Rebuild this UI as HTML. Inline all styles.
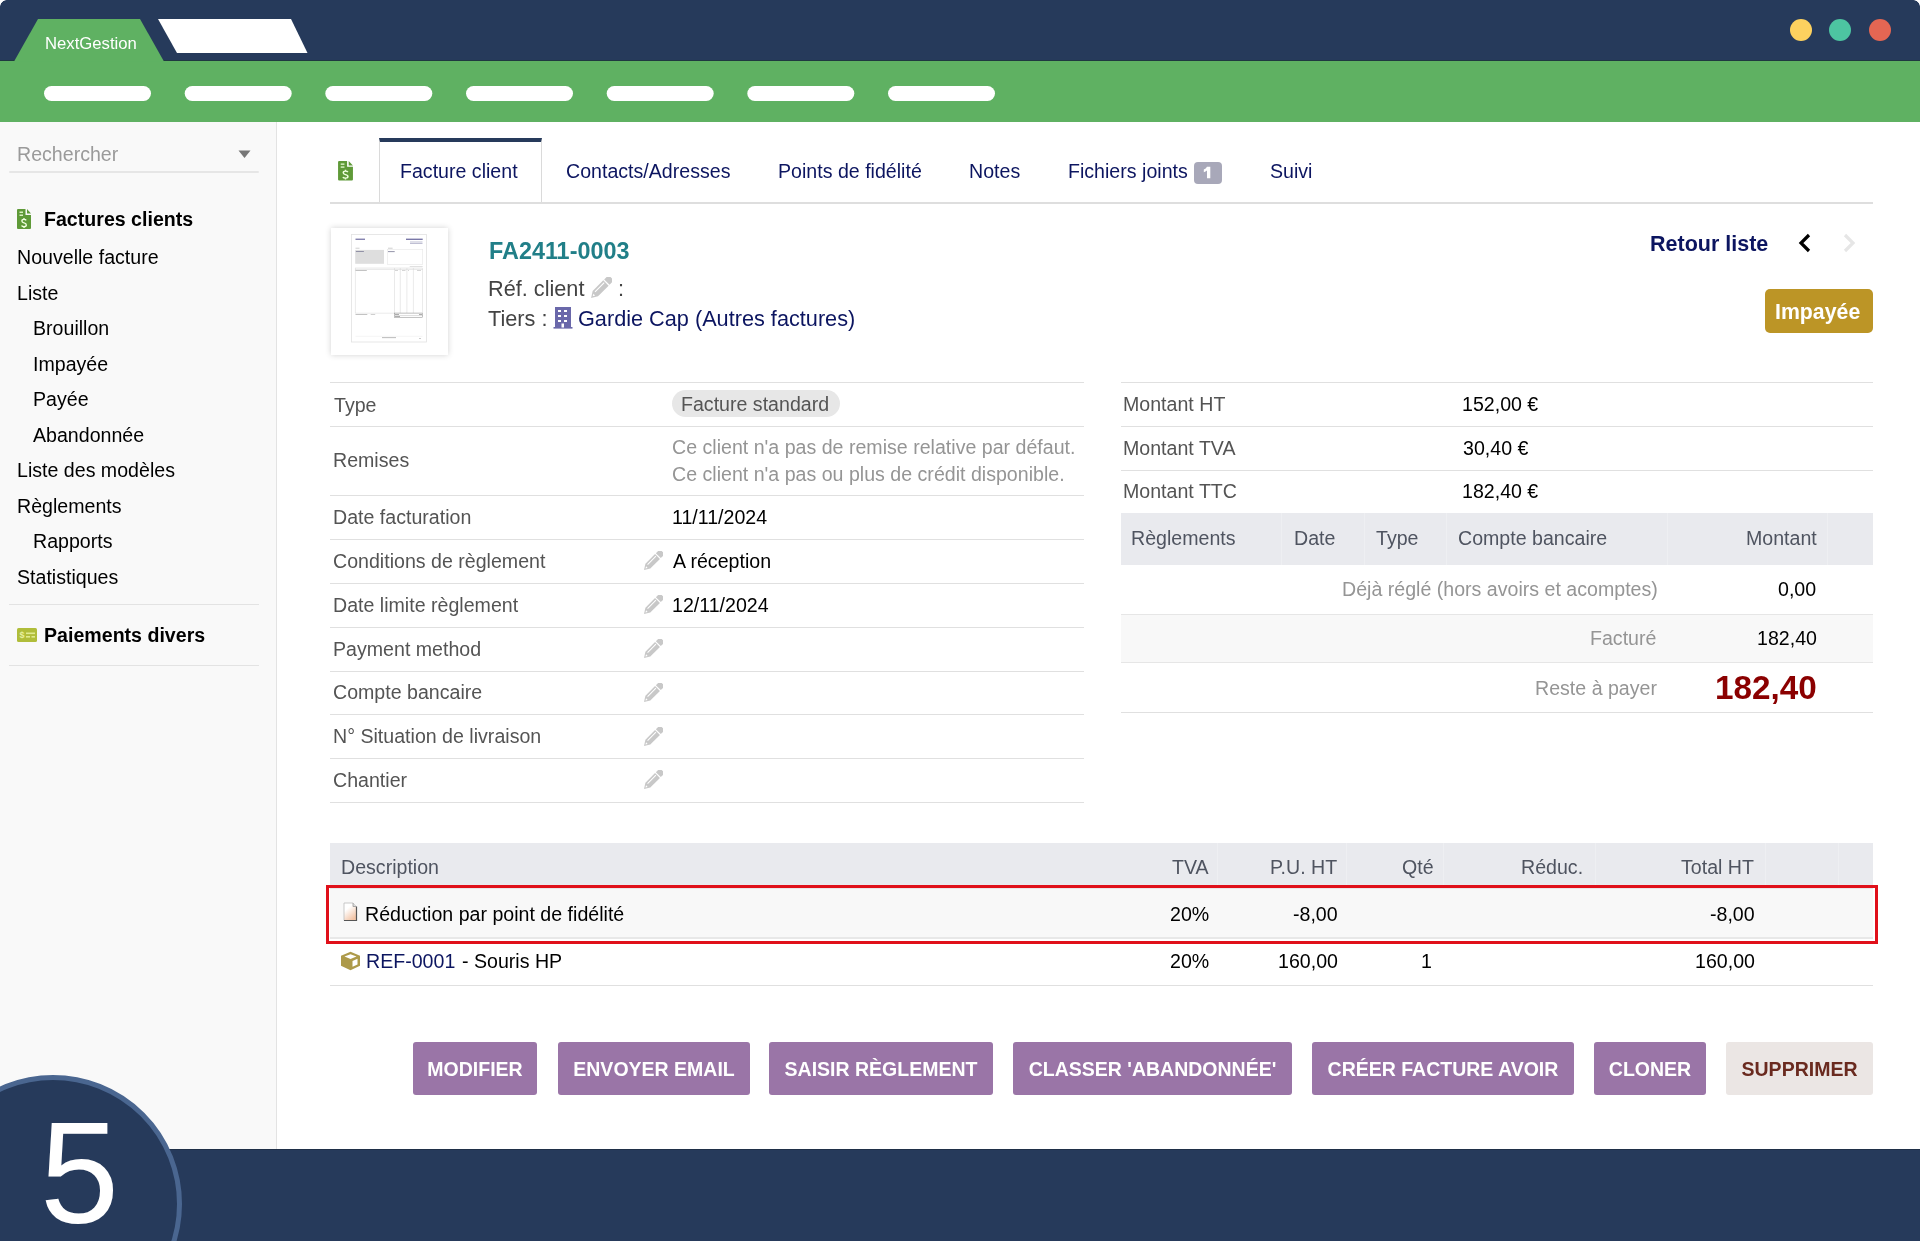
<!DOCTYPE html>
<html><head><meta charset="utf-8"><style>
html,body{margin:0;padding:0;width:1920px;height:1241px;overflow:hidden;background:#fff;font-family:"Liberation Sans",sans-serif}
.t{position:absolute;white-space:nowrap;line-height:1;will-change:transform}
.b{position:absolute}
.btn{position:absolute;top:1042px;height:53px;background:#9a75a7;color:#fff;font-weight:bold;font-size:19.5px;line-height:54px;text-align:center;border-radius:3px;white-space:nowrap;will-change:transform}
</style></head><body>
<svg class="b" style="left:0;top:0" width="1920" height="122">
<rect x="0" y="0" width="1920" height="61" fill="#263a5b"/><rect x="0" y="60" width="1920" height="1" fill="#1f3840"/>
<rect x="0" y="61" width="1920" height="61" fill="#5fb162"/>
<polygon points="14,61.5 38,19 140,19 164,61.5" fill="#5fb162"/>
<polygon points="158,19 291,19 307.5,53 177,53" fill="#fff"/>
<circle cx="1801" cy="30" r="11" fill="#fdd15f"/>
<circle cx="1840" cy="30" r="11" fill="#4dc5a1"/>
<circle cx="1880" cy="30" r="11" fill="#e46653"/>

<rect x="44.0" y="86" width="107" height="15" rx="7.5" fill="#fff"/>
<rect x="184.7" y="86" width="107" height="15" rx="7.5" fill="#fff"/>
<rect x="325.3" y="86" width="107" height="15" rx="7.5" fill="#fff"/>
<rect x="466.0" y="86" width="107" height="15" rx="7.5" fill="#fff"/>
<rect x="606.7" y="86" width="107" height="15" rx="7.5" fill="#fff"/>
<rect x="747.3" y="86" width="107" height="15" rx="7.5" fill="#fff"/>
<rect x="888.0" y="86" width="107" height="15" rx="7.5" fill="#fff"/>
</svg>
<div class="b" style="left:0;top:0;width:7px;height:7px;background:radial-gradient(circle at 7px 7px, transparent 6.5px, #fff 7.2px)"></div>
<div class="b" style="left:1913px;top:0;width:7px;height:7px;background:radial-gradient(circle at 0px 7px, transparent 6.5px, #fff 7.2px)"></div>
<div class="t" style="left:45.43px;top:36px;font-size:16.7px;color:#fff;transform-origin:0 13px;transform:scaleY(1.02);">NextGestion</div>
<div class="b" style="left:0px;top:122px;width:277px;height:1027px;background:#f9f9f9;border-right:1px solid #e3e3e3;box-sizing:border-box"></div>
<div class="t" style="left:16.79px;top:145px;font-size:19.6px;color:#9a9a9a;transform-origin:0 16px;transform:scaleY(1.02);">Rechercher</div>
<svg class="b" style="left:238px;top:150px" width="14" height="9"><polygon points="0.5,0.5 12.5,0.5 6.5,8" fill="#777"/></svg>
<div class="b" style="left:9px;top:171px;width:250px;height:2px;background:#e6e6e6;border-radius:2px"></div>
<svg class="b" style="left:16px;top:208px" width="16" height="22" viewBox="0 0 16 22">
<path d="M1.5 1 H9.5 V7 H15 V20 Q15 21 14 21 H2 Q1 21 1 20 V2 Q1 1 2 1 Z" fill="#5f9a38"/>
<path d="M11 1 L15 5.5 H11 Z" fill="#5f9a38"/>
<rect x="3.5" y="3.5" width="3.5" height="1.5" fill="#d8f0c0"/><rect x="3.5" y="6.5" width="3.5" height="1.5" fill="#d8f0c0"/>
<path d="M10.2 12.4 Q9.7 11.4 8 11.4 Q5.9 11.4 5.9 13 Q5.9 14.4 8 14.9 Q10.3 15.4 10.3 17 Q10.3 18.6 8 18.6 Q6.1 18.6 5.6 17.4 M8 10 V11.4 M8 18.6 V20" fill="none" stroke="#f0ffe0" stroke-width="1.4"/>
</svg>
<div class="t" style="left:43.79px;top:210px;font-size:19.6px;color:#000;font-weight:bold;transform-origin:0 16px;transform:scaleY(1.02);">Factures clients</div>
<div class="t" style="left:16.89px;top:248px;font-size:19.6px;color:#000;transform-origin:0 16px;transform:scaleY(1.02);">Nouvelle facture</div>
<div class="t" style="left:16.89px;top:284px;font-size:19.6px;color:#000;transform-origin:0 16px;transform:scaleY(1.02);">Liste</div>
<div class="t" style="left:32.99px;top:319px;font-size:19.6px;color:#000;transform-origin:0 16px;transform:scaleY(1.02);">Brouillon</div>
<div class="t" style="left:32.80px;top:355px;font-size:19.6px;color:#000;transform-origin:0 16px;transform:scaleY(1.02);">Impayée</div>
<div class="t" style="left:32.99px;top:390px;font-size:19.6px;color:#000;transform-origin:0 16px;transform:scaleY(1.02);">Payée</div>
<div class="t" style="left:33.06px;top:426px;font-size:19.6px;color:#000;transform-origin:0 16px;transform:scaleY(1.02);">Abandonnée</div>
<div class="t" style="left:16.89px;top:461px;font-size:19.6px;color:#000;transform-origin:0 16px;transform:scaleY(1.02);">Liste des modèles</div>
<div class="t" style="left:16.89px;top:497px;font-size:19.6px;color:#000;transform-origin:0 16px;transform:scaleY(1.02);">Règlements</div>
<div class="t" style="left:32.99px;top:532px;font-size:19.6px;color:#000;transform-origin:0 16px;transform:scaleY(1.02);">Rapports</div>
<div class="t" style="left:16.90px;top:568px;font-size:19.6px;color:#000;transform-origin:0 16px;transform:scaleY(1.02);">Statistiques</div>
<div class="b" style="left:9px;top:604px;width:250px;height:1px;background:#e3e3e3"></div>
<svg class="b" style="left:16px;top:627px" width="22" height="16" viewBox="0 0 22 16">
<rect x="1" y="1" width="20" height="14" rx="1.5" fill="#b0bd3a"/>
<text x="6" y="11" font-family="Liberation Sans" font-size="9" font-weight="bold" fill="#e8f0a0" text-anchor="middle">$</text>
<rect x="10" y="5.5" width="9" height="1.6" fill="#e0ea90"/><rect x="10" y="9" width="4" height="1.6" fill="#e0ea90"/><rect x="15.5" y="9" width="3.5" height="1.6" fill="#e0ea90"/>
</svg>
<div class="t" style="left:43.79px;top:626px;font-size:19.6px;color:#000;font-weight:bold;transform-origin:0 16px;transform:scaleY(1.02);">Paiements divers</div>
<div class="b" style="left:9px;top:665px;width:250px;height:1px;background:#e3e3e3"></div>
<div class="b" style="left:0px;top:1149px;width:1920px;height:92px;background:#263a5b"></div>
<div class="b" style="left:0px;top:1149px;width:1920px;height:1px;background:#1f2f47"></div>
<div class="b" style="left:-76px;top:1075px;width:258px;height:258px;border-radius:50%;background:#263a5b;border:5px solid #4a6690;box-sizing:border-box"></div>
<div class="t" style="left:39.52px;top:1103px;font-size:142px;color:#fff;transform-origin:0 120px;transform:scaleY(1.02);">5</div>
<svg class="b" style="left:337px;top:160px" width="17" height="21.5" viewBox="0 0 16 22" preserveAspectRatio="none">
<path d="M1.5 1 H9.5 V7 H15 V20 Q15 21 14 21 H2 Q1 21 1 20 V2 Q1 1 2 1 Z" fill="#5f9a38"/>
<path d="M11 1 L15 5.5 H11 Z" fill="#5f9a38"/>
<rect x="3.5" y="3.5" width="3.5" height="1.5" fill="#d8f0c0"/><rect x="3.5" y="6.5" width="3.5" height="1.5" fill="#d8f0c0"/>
<path d="M10.2 12.4 Q9.7 11.4 8 11.4 Q5.9 11.4 5.9 13 Q5.9 14.4 8 14.9 Q10.3 15.4 10.3 17 Q10.3 18.6 8 18.6 Q6.1 18.6 5.6 17.4 M8 10 V11.4 M8 18.6 V20" fill="none" stroke="#f0ffe0" stroke-width="1.4"/>
</svg>
<div class="b" style="left:330px;top:202px;width:1543px;height:2px;background:#dedede"></div>
<div class="b" style="left:379px;top:138px;width:163px;height:64px;background:#fff;border:1px solid #dadada;border-top:4px solid #263a5b;border-bottom:none;box-sizing:border-box"></div>
<div class="t" style="left:399.69px;top:162px;font-size:19.6px;color:#0c1560;transform-origin:0 16px;transform:scaleY(1.02);">Facture client</div>
<div class="t" style="left:565.90px;top:162px;font-size:19.6px;color:#0c1560;transform-origin:0 16px;transform:scaleY(1.02);">Contacts/Adresses</div>
<div class="t" style="left:777.69px;top:162px;font-size:19.6px;color:#0c1560;transform-origin:0 16px;transform:scaleY(1.02);">Points de fidélité</div>
<div class="t" style="left:969.49px;top:162px;font-size:19.6px;color:#0c1560;transform-origin:0 16px;transform:scaleY(1.02);">Notes</div>
<div class="t" style="left:1068.44px;top:162px;font-size:19.6px;color:#0c1560;transform-origin:0 16px;transform:scaleY(1.02);">Fichiers joints</div>
<div class="t" style="left:1270.20px;top:162px;font-size:19.6px;color:#0c1560;transform-origin:0 16px;transform:scaleY(1.02);">Suivi</div>
<div class="b" style="left:1194px;top:162px;width:28px;height:22px;background:#a8a8b9;border-radius:4px"></div>
<svg class="b" style="left:1194px;top:162px" width="28" height="22"><path d="M13 4.7 H16.3 V16.3 H13 V8.4 Q11.6 9.6 9.8 10.2 V7.5 Q12 6.6 13 4.7 Z" fill="#fff"/></svg>
<div class="b" style="left:331px;top:228px;width:117px;height:127px;background:#fff;box-shadow:0 0 6px rgba(0,0,0,0.18)"></div>
<svg class="b" style="left:351px;top:234px" width="76" height="109" viewBox="0 0 76 109">
<rect x="0.5" y="0.5" width="75" height="107.5" fill="#fff" stroke="#e2e2e2" stroke-width="0.8"/>
<rect x="4.5" y="4.6" width="9.5" height="1.3" fill="#7a78a8"/>
<rect x="55" y="4.6" width="16.7" height="1.4" fill="#7a78a8"/><rect x="59" y="7.6" width="12.5" height="0.8" fill="#b0b0c8"/><rect x="59" y="9.2" width="12.5" height="0.8" fill="#b0b0c8"/>
<rect x="4.5" y="13.8" width="4" height="0.7" fill="#bbb"/><rect x="37" y="13.8" width="4.6" height="0.7" fill="#bbb"/>
<rect x="4.2" y="15.9" width="28.8" height="13.9" fill="#dedede"/>
<rect x="4.9" y="17" width="8" height="0.9" fill="#8888a0"/>
<rect x="36.5" y="15.6" width="35.2" height="15" fill="#fff" stroke="#e6e6e6" stroke-width="0.6"/>
<rect x="37" y="17.2" width="6.7" height="0.9" fill="#8888a0"/>
<rect x="58.7" y="32" width="13" height="0.6" fill="#ccc"/>
<rect x="4.2" y="34" width="67.5" height="45.1" fill="none" stroke="#d8d8d8" stroke-width="0.5"/>
<line x1="4.2" y1="35.3" x2="71.7" y2="35.3" stroke="#c8c8c8" stroke-width="0.5"/>
<rect x="4.5" y="36" width="11.3" height="0.7" fill="#aaa"/>
<rect x="44" y="36" width="3" height="0.6" fill="#bbb"/><rect x="51" y="36" width="3.5" height="0.6" fill="#bbb"/><rect x="57" y="36" width="1" height="0.6" fill="#bbb"/><rect x="66" y="36" width="4" height="0.6" fill="#bbb"/>
<line x1="43.5" y1="34" x2="43.5" y2="79.1" stroke="#d0d0d0" stroke-width="0.45"/>
<line x1="49.3" y1="34" x2="49.3" y2="79.1" stroke="#d0d0d0" stroke-width="0.45"/>
<line x1="55.9" y1="34" x2="55.9" y2="79.1" stroke="#d0d0d0" stroke-width="0.45"/>
<line x1="62.4" y1="34" x2="62.4" y2="79.1" stroke="#d0d0d0" stroke-width="0.45"/>
<rect x="4.5" y="80" width="11.8" height="0.7" fill="#aaa"/><rect x="19.7" y="80" width="4.5" height="0.7" fill="#bbb"/>
<rect x="43.5" y="79.1" width="28.2" height="4.5" fill="#fff" stroke="#888" stroke-width="0.5"/>
<line x1="43.5" y1="81.6" x2="71.7" y2="81.6" stroke="#aaa" stroke-width="0.4"/>
<rect x="44" y="80" width="4" height="0.6" fill="#777"/><rect x="44" y="82.3" width="5" height="0.6" fill="#777"/><rect x="68" y="80" width="3" height="0.6" fill="#777"/>
<line x1="4.5" y1="102.3" x2="71.5" y2="102.3" stroke="#e4e4e4" stroke-width="0.4"/>
<rect x="31" y="103.3" width="14" height="0.8" fill="#aaa"/><rect x="68" y="104.2" width="2" height="0.6" fill="#aaa"/>
</svg>
<div class="t" style="left:488.63px;top:240px;font-size:23.4px;color:#217f88;font-weight:bold;transform-origin:0 19px;transform:scaleY(1.02);">FA2411-0003</div>
<div class="t" style="left:488.22px;top:278px;font-size:21.7px;color:#444;transform-origin:0 18px;transform:scaleY(1.02);">Réf. client</div>
<div class="t" style="left:618.43px;top:278px;font-size:21.7px;color:#444;transform-origin:0 18px;transform:scaleY(1.02);">:</div>
<div class="t" style="left:487.82px;top:308px;font-size:21.7px;color:#444;transform-origin:0 18px;transform:scaleY(1.02);">Tiers :</div>
<div class="t" style="left:577.91px;top:308px;font-size:21.7px;color:#0c1560;transform-origin:0 18px;transform:scaleY(1.02);">Gardie Cap (Autres factures)</div>
<svg class="b" style="left:590px;top:276.5px" width="22" height="22" viewBox="0 0 22 22"><g transform="rotate(-45 11 11)"><path d="M-3 11 L3 7.2 H18 V14.8 H3 Z" fill="#c8c8c8"/><path d="M19.3 7.2 H23 Q25.5 7.2 25.5 9.7 V12.3 Q25.5 14.8 23 14.8 H19.3 Z" fill="#c8c8c8"/><rect x="4" y="9" width="13" height="1.1" fill="#fff"/><path d="M-0.8 11 L1.5 9.8 V12.2 Z" fill="#fff"/></g></svg>
<svg class="b" style="left:553px;top:307px" width="20" height="22" viewBox="0 0 20 22">
<rect x="2" y="0" width="16" height="21" fill="#6a68aa"/><rect x="0.5" y="20" width="19" height="1.6" fill="#6a68aa"/>
<rect x="5" y="3" width="3" height="2" fill="#fff"/><rect x="11" y="3" width="3" height="2" fill="#fff"/>
<rect x="5" y="8" width="3" height="2" fill="#fff"/><rect x="11" y="8" width="3" height="2" fill="#fff"/>
<rect x="5" y="13" width="3" height="2" fill="#fff"/><rect x="11" y="13" width="3" height="2" fill="#fff"/>
<rect x="8.5" y="16.5" width="2.5" height="4" fill="#fff"/>
</svg>
<div class="t" style="left:1649.76px;top:234px;font-size:21.5px;color:#0c1560;font-weight:bold;transform-origin:0 17px;transform:scaleY(1.02);">Retour liste</div>
<svg class="b" style="left:1797px;top:232px" width="64" height="22"><polyline points="12,3 4,11 12,19" fill="none" stroke="#000" stroke-width="3.2"/><polyline points="48,3 56,11 48,19" fill="none" stroke="#e6e6e6" stroke-width="3.2"/></svg>
<div class="b" style="left:1765px;top:289px;width:108px;height:44px;background:#bc9526;border-radius:5px"></div>
<div class="t" style="left:1775.37px;top:302px;font-size:21.3px;color:#fff;font-weight:bold;transform-origin:0 17px;transform:scaleY(1.02);">Impayée</div>
<div class="b" style="left:330px;top:382px;width:754px;height:1px;background:#e0e0e0"></div>
<div class="b" style="left:330px;top:426px;width:754px;height:1px;background:#e0e0e0"></div>
<div class="b" style="left:330px;top:495px;width:754px;height:1px;background:#e0e0e0"></div>
<div class="b" style="left:330px;top:539px;width:754px;height:1px;background:#e0e0e0"></div>
<div class="b" style="left:330px;top:583px;width:754px;height:1px;background:#e0e0e0"></div>
<div class="b" style="left:330px;top:627px;width:754px;height:1px;background:#e0e0e0"></div>
<div class="b" style="left:330px;top:671px;width:754px;height:1px;background:#e0e0e0"></div>
<div class="b" style="left:330px;top:714px;width:754px;height:1px;background:#e0e0e0"></div>
<div class="b" style="left:330px;top:758px;width:754px;height:1px;background:#e0e0e0"></div>
<div class="b" style="left:330px;top:802px;width:754px;height:1px;background:#e0e0e0"></div>
<div class="t" style="left:333.57px;top:396px;font-size:19.6px;color:#545454;transform-origin:0 16px;transform:scaleY(1.02);">Type</div>
<div class="t" style="left:333.39px;top:451px;font-size:19.6px;color:#545454;transform-origin:0 16px;transform:scaleY(1.02);">Remises</div>
<div class="t" style="left:333.39px;top:508px;font-size:19.6px;color:#545454;transform-origin:0 16px;transform:scaleY(1.02);">Date facturation</div>
<div class="t" style="left:333.00px;top:552px;font-size:19.6px;color:#545454;transform-origin:0 16px;transform:scaleY(1.02);">Conditions de règlement</div>
<div class="t" style="left:333.39px;top:596px;font-size:19.6px;color:#545454;transform-origin:0 16px;transform:scaleY(1.02);">Date limite règlement</div>
<div class="t" style="left:333.49px;top:640px;font-size:19.6px;color:#545454;transform-origin:0 16px;transform:scaleY(1.02);">Payment method</div>
<div class="t" style="left:333.00px;top:683px;font-size:19.6px;color:#545454;transform-origin:0 16px;transform:scaleY(1.02);">Compte bancaire</div>
<div class="t" style="left:333.49px;top:727px;font-size:19.6px;color:#545454;transform-origin:0 16px;transform:scaleY(1.02);">N° Situation de livraison</div>
<div class="t" style="left:333.00px;top:771px;font-size:19.6px;color:#545454;transform-origin:0 16px;transform:scaleY(1.02);">Chantier</div>
<div class="b" style="left:672px;top:390px;width:168px;height:27px;background:#e7e7e7;border-radius:14px"></div>
<div class="t" style="left:681.19px;top:395px;font-size:19.6px;color:#555;transform-origin:0 16px;transform:scaleY(1.02);">Facture standard</div>
<div class="t" style="left:672.40px;top:438px;font-size:19.6px;color:#959595;transform-origin:0 16px;transform:scaleY(1.02);">Ce client n'a pas de remise relative par défaut.</div>
<div class="t" style="left:672.40px;top:465px;font-size:19.6px;color:#959595;transform-origin:0 16px;transform:scaleY(1.02);">Ce client n'a pas ou plus de crédit disponible.</div>
<div class="t" style="left:671.91px;top:508px;font-size:19.6px;color:#000;transform-origin:0 16px;transform:scaleY(1.02);">11/11/2024</div>
<div class="t" style="left:673.36px;top:552px;font-size:19.6px;color:#000;transform-origin:0 16px;transform:scaleY(1.02);">A réception</div>
<div class="t" style="left:671.91px;top:596px;font-size:19.6px;color:#000;transform-origin:0 16px;transform:scaleY(1.02);">12/11/2024</div>
<svg class="b" style="left:643px;top:551px" width="20" height="20" viewBox="0 0 22 22"><g transform="rotate(-45 11 11)"><path d="M-3 11 L3 7.2 H18 V14.8 H3 Z" fill="#c8c8c8"/><path d="M19.3 7.2 H23 Q25.5 7.2 25.5 9.7 V12.3 Q25.5 14.8 23 14.8 H19.3 Z" fill="#c8c8c8"/><rect x="4" y="9" width="13" height="1.1" fill="#fff"/><path d="M-0.8 11 L1.5 9.8 V12.2 Z" fill="#fff"/></g></svg>
<svg class="b" style="left:643px;top:595px" width="20" height="20" viewBox="0 0 22 22"><g transform="rotate(-45 11 11)"><path d="M-3 11 L3 7.2 H18 V14.8 H3 Z" fill="#c8c8c8"/><path d="M19.3 7.2 H23 Q25.5 7.2 25.5 9.7 V12.3 Q25.5 14.8 23 14.8 H19.3 Z" fill="#c8c8c8"/><rect x="4" y="9" width="13" height="1.1" fill="#fff"/><path d="M-0.8 11 L1.5 9.8 V12.2 Z" fill="#fff"/></g></svg>
<svg class="b" style="left:643px;top:639px" width="20" height="20" viewBox="0 0 22 22"><g transform="rotate(-45 11 11)"><path d="M-3 11 L3 7.2 H18 V14.8 H3 Z" fill="#c8c8c8"/><path d="M19.3 7.2 H23 Q25.5 7.2 25.5 9.7 V12.3 Q25.5 14.8 23 14.8 H19.3 Z" fill="#c8c8c8"/><rect x="4" y="9" width="13" height="1.1" fill="#fff"/><path d="M-0.8 11 L1.5 9.8 V12.2 Z" fill="#fff"/></g></svg>
<svg class="b" style="left:643px;top:683px" width="20" height="20" viewBox="0 0 22 22"><g transform="rotate(-45 11 11)"><path d="M-3 11 L3 7.2 H18 V14.8 H3 Z" fill="#c8c8c8"/><path d="M19.3 7.2 H23 Q25.5 7.2 25.5 9.7 V12.3 Q25.5 14.8 23 14.8 H19.3 Z" fill="#c8c8c8"/><rect x="4" y="9" width="13" height="1.1" fill="#fff"/><path d="M-0.8 11 L1.5 9.8 V12.2 Z" fill="#fff"/></g></svg>
<svg class="b" style="left:643px;top:727px" width="20" height="20" viewBox="0 0 22 22"><g transform="rotate(-45 11 11)"><path d="M-3 11 L3 7.2 H18 V14.8 H3 Z" fill="#c8c8c8"/><path d="M19.3 7.2 H23 Q25.5 7.2 25.5 9.7 V12.3 Q25.5 14.8 23 14.8 H19.3 Z" fill="#c8c8c8"/><rect x="4" y="9" width="13" height="1.1" fill="#fff"/><path d="M-0.8 11 L1.5 9.8 V12.2 Z" fill="#fff"/></g></svg>
<svg class="b" style="left:643px;top:770px" width="20" height="20" viewBox="0 0 22 22"><g transform="rotate(-45 11 11)"><path d="M-3 11 L3 7.2 H18 V14.8 H3 Z" fill="#c8c8c8"/><path d="M19.3 7.2 H23 Q25.5 7.2 25.5 9.7 V12.3 Q25.5 14.8 23 14.8 H19.3 Z" fill="#c8c8c8"/><rect x="4" y="9" width="13" height="1.1" fill="#fff"/><path d="M-0.8 11 L1.5 9.8 V12.2 Z" fill="#fff"/></g></svg>
<div class="b" style="left:1121px;top:382px;width:752px;height:1px;background:#e0e0e0"></div>
<div class="b" style="left:1121px;top:426px;width:752px;height:1px;background:#e0e0e0"></div>
<div class="b" style="left:1121px;top:470px;width:752px;height:1px;background:#e0e0e0"></div>
<div class="t" style="left:1123.19px;top:395px;font-size:19.6px;color:#545454;transform-origin:0 16px;transform:scaleY(1.02);">Montant HT</div>
<div class="t" style="left:1461.81px;top:395px;font-size:19.6px;color:#000;transform-origin:0 16px;transform:scaleY(1.02);">152,00 €</div>
<div class="t" style="left:1123.19px;top:439px;font-size:19.6px;color:#545454;transform-origin:0 16px;transform:scaleY(1.02);">Montant TVA</div>
<div class="t" style="left:1462.56px;top:439px;font-size:19.6px;color:#000;transform-origin:0 16px;transform:scaleY(1.02);">30,40 €</div>
<div class="t" style="left:1123.19px;top:482px;font-size:19.6px;color:#545454;transform-origin:0 16px;transform:scaleY(1.02);">Montant TTC</div>
<div class="t" style="left:1461.81px;top:482px;font-size:19.6px;color:#000;transform-origin:0 16px;transform:scaleY(1.02);">182,40 €</div>
<div class="b" style="left:1121px;top:513px;width:752px;height:52px;background:#e9eaee"></div>
<div class="b" style="left:1281px;top:513px;width:1px;height:52px;background:#eeeff2"></div>
<div class="b" style="left:1364px;top:513px;width:1px;height:52px;background:#eeeff2"></div>
<div class="b" style="left:1446px;top:513px;width:1px;height:52px;background:#eeeff2"></div>
<div class="b" style="left:1667px;top:513px;width:1px;height:52px;background:#eeeff2"></div>
<div class="b" style="left:1827px;top:513px;width:1px;height:52px;background:#eeeff2"></div>
<div class="t" style="left:1130.69px;top:529px;font-size:19.6px;color:#4f5460;transform-origin:0 16px;transform:scaleY(1.02);">Règlements</div>
<div class="t" style="left:1293.69px;top:529px;font-size:19.6px;color:#4f5460;transform-origin:0 16px;transform:scaleY(1.02);">Date</div>
<div class="t" style="left:1375.87px;top:529px;font-size:19.6px;color:#4f5460;transform-origin:0 16px;transform:scaleY(1.02);">Type</div>
<div class="t" style="left:1458.30px;top:529px;font-size:19.6px;color:#4f5460;transform-origin:0 16px;transform:scaleY(1.02);">Compte bancaire</div>
<div class="t" style="right:103.47px;top:529px;font-size:19.6px;color:#4f5460;transform-origin:0 16px;transform:scaleY(1.02);">Montant</div>
<div class="t" style="right:262.28px;top:580px;font-size:19.6px;color:#959595;transform-origin:0 16px;transform:scaleY(1.02);">Déjà réglé (hors avoirs et acomptes)</div>
<div class="t" style="right:103.53px;top:580px;font-size:19.6px;color:#000;transform-origin:0 16px;transform:scaleY(1.02);">0,00</div>
<div class="b" style="left:1121px;top:614px;width:752px;height:49px;background:#f8f8f8;border-top:1px solid #e6e6e6;border-bottom:1px solid #e6e6e6;box-sizing:border-box"></div>
<div class="t" style="right:263.43px;top:629px;font-size:19.6px;color:#959595;transform-origin:0 16px;transform:scaleY(1.02);">Facturé</div>
<div class="t" style="right:103.53px;top:629px;font-size:19.6px;color:#000;transform-origin:0 16px;transform:scaleY(1.02);">182,40</div>
<div class="t" style="right:263.47px;top:679px;font-size:19.6px;color:#959595;transform-origin:0 16px;transform:scaleY(1.02);">Reste à payer</div>
<div class="t" style="right:103.53px;top:671px;font-size:33.3px;color:#8b0000;font-weight:bold;transform-origin:0 28px;transform:scaleY(1.02);">182,40</div>
<div class="b" style="left:1121px;top:712px;width:752px;height:1px;background:#e0e0e0"></div>
<div class="b" style="left:330px;top:843px;width:1543px;height:44px;background:#e9eaee"></div>
<div class="b" style="left:1217px;top:843px;width:1px;height:44px;background:#eeeff2"></div>
<div class="b" style="left:1346px;top:843px;width:1px;height:44px;background:#eeeff2"></div>
<div class="b" style="left:1443px;top:843px;width:1px;height:44px;background:#eeeff2"></div>
<div class="b" style="left:1595px;top:843px;width:1px;height:44px;background:#eeeff2"></div>
<div class="b" style="left:1765px;top:843px;width:1px;height:44px;background:#eeeff2"></div>
<div class="b" style="left:1838px;top:843px;width:1px;height:44px;background:#eeeff2"></div>
<div class="t" style="left:340.99px;top:858px;font-size:19.6px;color:#4f5460;transform-origin:0 16px;transform:scaleY(1.02);">Description</div>
<div class="t" style="right:711.46px;top:858px;font-size:19.6px;color:#4f5460;transform-origin:0 16px;transform:scaleY(1.02);">TVA</div>
<div class="t" style="right:582.85px;top:858px;font-size:19.6px;color:#4f5460;transform-origin:0 16px;transform:scaleY(1.02);">P.U. HT</div>
<div class="t" style="right:486.63px;top:858px;font-size:19.6px;color:#4f5460;transform-origin:0 16px;transform:scaleY(1.02);">Qté</div>
<div class="t" style="right:336.52px;top:858px;font-size:19.6px;color:#4f5460;transform-origin:0 16px;transform:scaleY(1.02);">Réduc.</div>
<div class="t" style="right:165.85px;top:858px;font-size:19.6px;color:#4f5460;transform-origin:0 16px;transform:scaleY(1.02);">Total HT</div>
<div class="b" style="left:330px;top:887px;width:1543px;height:52px;background:#f8f8f8;border-top:2px solid #e8e8e8;border-bottom:2px solid #e8e8e8;box-sizing:border-box"></div>
<svg class="b" style="left:343px;top:902px" width="15" height="20" viewBox="0 0 15 20">
<defs><linearGradient id="dg" x1="0" y1="0" x2="0.6" y2="1"><stop offset="0.35" stop-color="#fff"/><stop offset="1" stop-color="#f2c4a6"/></linearGradient></defs>
<path d="M1 1 H10 L13.5 4.5 V18.5 H1 Z" fill="url(#dg)" stroke="#bbb" stroke-width="0.8"/>
<path d="M1 18.5 H13.5 V4.5" fill="none" stroke="#555" stroke-width="1.2"/>
<path d="M10 1 V4.5 H13.5" fill="#ddd" stroke="#999" stroke-width="0.8"/>
</svg>
<div class="t" style="left:365.19px;top:905px;font-size:19.6px;color:#000;transform-origin:0 16px;transform:scaleY(1.02);">Réduction par point de fidélité</div>
<div class="t" style="right:710.81px;top:905px;font-size:19.6px;color:#000;transform-origin:0 16px;transform:scaleY(1.02);">20%</div>
<div class="t" style="right:582.53px;top:905px;font-size:19.6px;color:#000;transform-origin:0 16px;transform:scaleY(1.02);">-8,00</div>
<div class="t" style="right:165.53px;top:905px;font-size:19.6px;color:#000;transform-origin:0 16px;transform:scaleY(1.02);">-8,00</div>
<div class="b" style="left:326px;top:885px;width:1552px;height:59px;border:3px solid #e0101a;box-sizing:border-box"></div>
<svg class="b" style="left:340px;top:951px" width="21" height="20" viewBox="0 0 21 20">
<path d="M10.5 0.8 L20 4.8 V14.8 L10.5 19.2 L1 14.8 V4.8 Z" fill="#ad9a4a"/>
<path d="M10.5 3.2 L16.5 5.6 L10.5 8 L4.5 5.6 Z" fill="#fff"/>
<path d="M12.5 10 L17.5 7.8 V13.5 L12.5 15.8 Z" fill="#fff"/>
</svg>
<div class="t" style="left:366.19px;top:952px;font-size:19.6px;color:#0c1560;transform-origin:0 16px;transform:scaleY(1.02);">REF-0001</div>
<div class="t" style="left:461.73px;top:952px;font-size:19.6px;color:#000;transform-origin:0 16px;transform:scaleY(1.02);">- Souris HP</div>
<div class="b" style="left:330px;top:985px;width:1543px;height:1px;background:#e0e0e0"></div>
<div class="t" style="right:710.81px;top:952px;font-size:19.6px;color:#000;transform-origin:0 16px;transform:scaleY(1.02);">20%</div>
<div class="t" style="right:582.53px;top:952px;font-size:19.6px;color:#000;transform-origin:0 16px;transform:scaleY(1.02);">160,00</div>
<div class="t" style="right:487.84px;top:952px;font-size:19.6px;color:#000;transform-origin:0 16px;transform:scaleY(1.02);">1</div>
<div class="t" style="right:165.53px;top:952px;font-size:19.6px;color:#000;transform-origin:0 16px;transform:scaleY(1.02);">160,00</div>
<div class="btn" style="left:413px;width:124px">MODIFIER</div>
<div class="btn" style="left:558px;width:192px">ENVOYER EMAIL</div>
<div class="btn" style="left:769px;width:224px">SAISIR RÈGLEMENT</div>
<div class="btn" style="left:1013px;width:279px">CLASSER 'ABANDONNÉE'</div>
<div class="btn" style="left:1312px;width:262px">CRÉER FACTURE AVOIR</div>
<div class="btn" style="left:1594px;width:112px">CLONER</div>
<div class="btn" style="left:1726px;width:147px;background:#ebe6e4;color:#6a2a1f">SUPPRIMER</div>
</body></html>
